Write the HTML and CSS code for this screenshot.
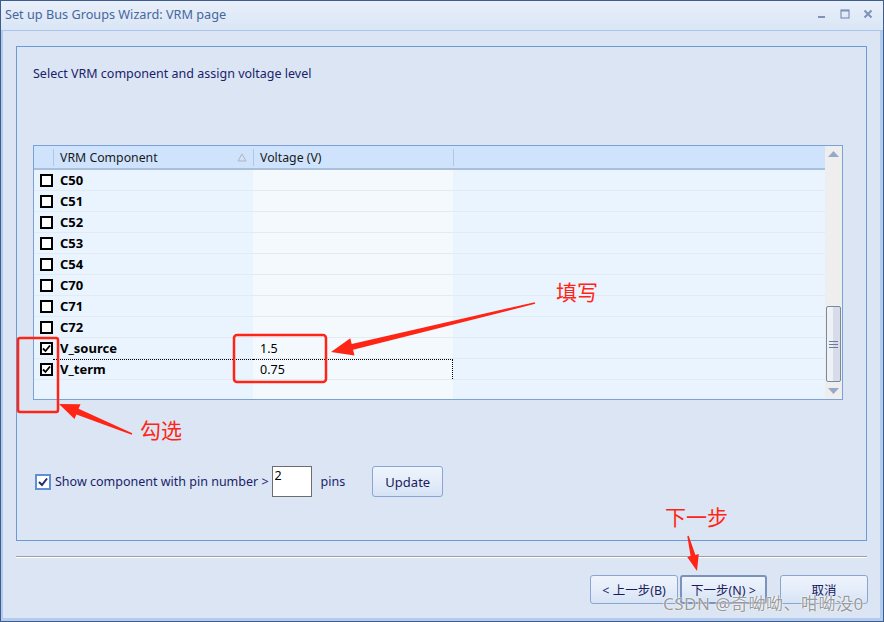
FILE: index.html
```html
<!DOCTYPE html>
<html lang="zh-CN">
<head>
    <meta charset="UTF-8">
    <title>Set up Bus Groups Wizard: VRM page</title>
    <link rel="stylesheet" href="styles.css">
</head>
<body>
    <div class="window">
        <div class="titlebar">
            <span class="title">Set up Bus Groups Wizard: VRM page</span>
            <div class="controls">
                <svg width="10" height="10" viewBox="0 0 10 10"><rect x="1" y="7" width="7" height="2" fill="#7d93b7"/></svg>
                <svg width="10" height="10" viewBox="0 0 10 10"><rect x="1" y="1" width="8" height="8" fill="none" stroke="#7d93b7" stroke-width="1.2"/><rect x="1" y="1" width="8" height="1.5" fill="#7d93b7"/></svg>
                <svg width="10" height="10" viewBox="0 0 10 10"><path d="M1.5 1.5 L8.5 8.5 M8.5 1.5 L1.5 8.5" stroke="#7d93b7" stroke-width="2"/></svg>
            </div>
        </div>
        <div class="frame">
            <div class="panel">
                <p class="intro">Select VRM component and assign voltage level</p>
                <div class="grid">
                    <div class="grid-main">
                        <div class="grid-head">
                            <div class="col-check"></div>
                            <div class="col-name">VRM Component
                                <svg class="sort" width="10" height="9" viewBox="0 0 10 9"><path d="M5 1 L9 8 L1 8 Z" fill="none" stroke="#b4b4b4"/></svg>
                            </div>
                            <div class="col-volt">Voltage (V)</div>
                            <div class="col-rest"></div>
                        </div>
                        <div class="grid-body">
                            <div class="row"><div class="col-check"><span class="box"></span></div><div class="col-name">C50</div><div class="col-volt"></div><div class="col-rest"></div></div>
                            <div class="row"><div class="col-check"><span class="box"></span></div><div class="col-name">C51</div><div class="col-volt"></div><div class="col-rest"></div></div>
                            <div class="row"><div class="col-check"><span class="box"></span></div><div class="col-name">C52</div><div class="col-volt"></div><div class="col-rest"></div></div>
                            <div class="row"><div class="col-check"><span class="box"></span></div><div class="col-name">C53</div><div class="col-volt"></div><div class="col-rest"></div></div>
                            <div class="row"><div class="col-check"><span class="box"></span></div><div class="col-name">C54</div><div class="col-volt"></div><div class="col-rest"></div></div>
                            <div class="row"><div class="col-check"><span class="box"></span></div><div class="col-name">C70</div><div class="col-volt"></div><div class="col-rest"></div></div>
                            <div class="row"><div class="col-check"><span class="box"></span></div><div class="col-name">C71</div><div class="col-volt"></div><div class="col-rest"></div></div>
                            <div class="row"><div class="col-check"><span class="box"></span></div><div class="col-name">C72</div><div class="col-volt"></div><div class="col-rest"></div></div>
                            <div class="row"><div class="col-check"><span class="box checked"><svg width="9" height="9" viewBox="0 0 9 9"><path d="M1 4.5 L3.5 7 L8 1.5" fill="none" stroke="#000" stroke-width="1.8"/></svg></span></div><div class="col-name">V_source</div><div class="col-volt">1.5</div><div class="col-rest"></div></div>
                            <div class="row focus"><div class="col-check"><span class="box checked"><svg width="9" height="9" viewBox="0 0 9 9"><path d="M1 4.5 L3.5 7 L8 1.5" fill="none" stroke="#000" stroke-width="1.8"/></svg></span></div><div class="col-name">V_term</div><div class="col-volt">0.75</div><div class="col-rest"></div></div>
                        </div>
                    </div>
                    <div class="scrollbar">
                        <svg class="arrow-up" width="11" height="6" viewBox="0 0 11 6"><path d="M5.5 0 L11 6 L0 6 Z" fill="#98a8c6"/></svg>
                        <div class="thumb">
                            <svg width="9" height="7" viewBox="0 0 9 7"><path d="M0 0.5 H9 M0 3.5 H9 M0 6.5 H9" stroke="#6b7c99"/></svg>
                        </div>
                        <svg class="arrow-down" width="11" height="6" viewBox="0 0 11 6"><path d="M0 0 L11 0 L5.5 6 Z" fill="#98a8c6"/></svg>
                    </div>
                </div>
                <div class="options">
                    <span class="opt-check"><svg width="12" height="12" viewBox="0 0 12 12"><path d="M2 6 L5 9 L10 2.5" fill="none" stroke="#1c2b6b" stroke-width="2"/></svg></span>
                    <label class="opt-label">Show component with pin number &gt;</label>
                    <input class="pin-input" type="text" value="2">
                    <span class="opt-unit">pins</span>
                    <button class="btn update">Update</button>
                </div>
            </div>
            <div class="separator"></div>
            <div class="buttons">
                <button class="btn nav">&lt; 上一步(B)</button>
                <button class="btn nav default">下一步(N) &gt;</button>
                <button class="btn nav cancel">取消</button>
            </div>
        </div>
    </div>

    <svg class="annotations" width="884" height="622" viewBox="0 0 884 622">
        <rect x="234" y="335" width="92" height="47" rx="3" fill="none" stroke="#ff2516" stroke-width="2.5"/>
        <rect x="18" y="338" width="40" height="74" rx="2" fill="none" stroke="#ff2516" stroke-width="2.5"/>
        <polygon points="331,352 350.3,338.2 351.7,344 534.8,302.2 535.2,303.8 353.1,349.8 354.5,355.6" fill="#ff2516"/>
        <polygon points="59,404 80.5,404.2 78.6,408.8 132.3,433.3 131.7,434.7 76.4,414.4 74.5,419" fill="#ff2516"/>
        <polygon points="697,571 698.8,554 695.4,554.9 688.7,535.8 687.3,536.2 690.6,556.1 687.2,557" fill="#ff2516"/>
        <text x="556" y="300" class="note">填写</text>
        <text x="140" y="438" class="note">勾选</text>
        <text x="665" y="525" class="note">下一步</text>
    </svg>
    <div class="watermark">CSDN @奇呦呦、咁呦没0</div>
</body>
</html>
```

FILE: styles.css
```css
body{
    margin: 0;
    position: relative;
    width: 884px;
    height: 622px;
    overflow: hidden;
    font-family: "Noto Sans", "Noto Sans CJK SC", sans-serif;
    font-size: 12.5px;
}
.window{
    width: 884px;
    height: 622px;
    box-sizing: border-box;
    border: 1px solid #3d5d8e;
    background: #dbe5f3;
    display: flex;
    flex-direction: column;
}
.titlebar{
    height: 29px;
    flex: none;
    display: flex;
    align-items: center;
    padding: 0 10px 0 4px;
    background: linear-gradient(#e8eff9, #dae6f6);
    border-bottom: 1px solid #a9c6ec;
}
.title{
    font-size: 12.7px;
    color: #46679d;
    margin-top: -4px;
}
.controls{
    margin-left: auto;
    display: flex;
    gap: 13px;
    margin-top: -4px;
}
.frame{
    flex: 1;
    border-left: 2px solid #b3cbee;
    border-right: 3px solid #b3cbee;
    border-bottom: 3px solid #b3cbee;
    padding: 15px 0 0 13px;
}
.panel{
    width: 851px;
    height: 495px;
    box-sizing: border-box;
    border: 1px solid #6a9ad8;
    padding: 0 0 0 16px;
}
.intro{
    margin: 19px 0 0;
    line-height: 16px;
    color: #201d6b;
}

/* grid */
.grid{
    margin-top: 63px;
    width: 810px;
    height: 255px;
    box-sizing: border-box;
    border: 1px solid #7aa2d8;
    display: flex;
}
.grid-main{
    flex: 1;
    display: flex;
    flex-direction: column;
}
.grid-head{
    height: 22px;
    flex: none;
    display: flex;
    background: #cfe4fc;
    border-bottom: 2px solid #a9bfdc;
    color: #1a1a1a;
    font-size: 12.3px;
}
.grid-head > div{
    display: flex;
    align-items: center;
    position: relative;
}
.grid-head > div + div::before{
    content: "";
    position: absolute;
    left: 0;
    top: 3px;
    bottom: 2px;
    border-left: 1px solid #b3c7e2;
}
.col-check{
    width: 19px;
    flex: none;
}
.col-name{
    width: 200px;
    flex: none;
    box-sizing: border-box;
    padding-left: 7px;
}
.col-volt{
    width: 200px;
    flex: none;
    box-sizing: border-box;
    padding-left: 7px;
}
.col-rest{
    flex: 1;
}
.sort{
    margin-left: auto;
    margin-right: 6px;
}
.grid-body{
    flex: 1;
    background: linear-gradient(to right, #eaf4fe 219px, #f4f9fe 219px, #f4f9fe 419px, #eaf4fe 419px);
}
.row{
    height: 20px;
    display: flex;
    align-items: center;
    border-bottom: 1px solid #e4eaf1;
    font-weight: bold;
    font-size: 13px;
    color: #000;
}
.row .col-volt{
    font-weight: normal;
    font-size: 12.5px;
}
.row .col-check{
    height: 100%;
    display: flex;
    align-items: center;
}
.box{
    width: 13px;
    height: 13px;
    box-sizing: border-box;
    border: 2px solid #000;
    background: #fff;
    margin-left: 6px;
    display: flex;
    align-items: center;
    justify-content: center;
}
.row.focus .col-name,
.row.focus .col-volt{
    height: 100%;
    display: flex;
    align-items: center;
    border-top: 1px dotted #000;
    margin-top: -1px;
}
.row.focus .col-volt{
    border-right: 1px dotted #000;
}

/* scrollbar */
.scrollbar{
    width: 17px;
    flex: none;
    background: #eeeeee;
    position: relative;
}
.arrow-up{
    position: absolute;
    left: 3px;
    top: 5px;
}
.arrow-down{
    position: absolute;
    left: 3px;
    bottom: 5px;
}
.thumb{
    position: absolute;
    left: 1px;
    top: 160px;
    width: 15px;
    height: 76px;
    box-sizing: border-box;
    border: 1px solid #7a899f;
    border-radius: 2px;
    background: linear-gradient(to right, #eef1f5 45%, #d6dde8 45%);
    display: flex;
    align-items: center;
    justify-content: center;
}

/* options row */
.options{
    margin-top: 66px;
    height: 31px;
    display: flex;
    align-items: center;
    color: #201d6b;
}
.opt-check{
    width: 16px;
    height: 16px;
    box-sizing: border-box;
    border: 2px solid #5f8fd6;
    background: #fff;
    margin-left: 2px;
    display: flex;
    align-items: center;
    justify-content: center;
}
.opt-label{
    margin-left: 4px;
}
.pin-input{
    width: 40px;
    height: 31px;
    box-sizing: border-box;
    margin-left: 3px;
    border: 1px solid #6d6d6d;
    background: #fff;
    padding: 0 2px 12px;
    font-family: inherit;
    font-size: 12.5px;
    color: #000;
}
.opt-unit{
    margin-left: 9px;
}
.btn{
    font-family: "Noto Sans", "Noto Sans CJK SC", sans-serif;
    font-size: 12.5px;
    color: #1b1b5e;
    border: 1px solid #8aa5cf;
    border-radius: 3px;
    background: linear-gradient(#eef4fd, #e4edf9 50%, #d6e3f5);
    padding: 0;
}
.update{
    margin-left: 27px;
    width: 71px;
    height: 31px;
    font-size: 13px;
}

/* footer */
.separator{
    margin-top: 15px;
    width: 851px;
    border-top: 1px solid #a0a0a0;
    border-bottom: 1px solid #ffffff;
}
.buttons{
    width: 852px;
    margin-top: 17px;
    display: flex;
    justify-content: flex-end;
    gap: 2px;
}
.nav{
    width: 88px;
    height: 29px;
}
.nav.default{
    width: 87px;
    border: 2px solid #7b93ba;
}
.nav.cancel{
    margin-left: 11px;
}

/* annotations */
.annotations{
    position: absolute;
    left: 0;
    top: 0;
    pointer-events: none;
}
.note{
    font-family: "Noto Sans CJK SC", sans-serif;
    font-size: 21px;
    fill: #ff2516;
}
.watermark{
    position: absolute;
    left: 663px;
    top: 590px;
    font-family: "Noto Sans", "Noto Sans CJK SC", sans-serif;
    font-size: 17px;
    letter-spacing: 0.5px;
    color: rgba(110, 110, 110, 0.7);
    text-shadow: 0 0 2px #fff, 0 0 1px #fff;
    white-space: nowrap;
}
```
